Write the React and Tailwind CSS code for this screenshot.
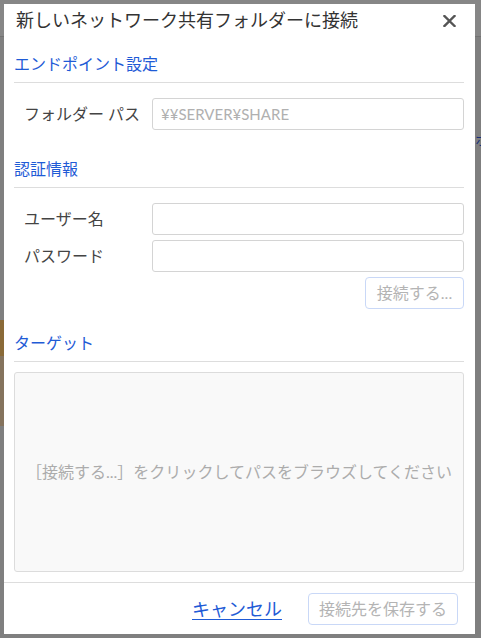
import React from "react";

const font = { fontFamily: "Lato, 'Noto Sans CJK JP', sans-serif" };

function SectionHeader({ children, className = "" }) {
  return (
    <div className={"border-b border-[#dddddd] pb-[6px] " + className}>
      <div className="text-[16px] leading-[24px] text-[#1f5bd6]">{children}</div>
    </div>
  );
}

function Row({ label, placeholder, className = "" }) {
  return (
    <div className={"flex items-center " + className}>
      <div className="w-[138px] pl-[10px] text-[16px] leading-[24px] text-[#444444]">{label}</div>
      <input
        className="h-[32px] w-[312px] rounded-[3px] border border-[#d4d4d4] bg-white px-[8px] text-[15px] text-[#333] outline-none placeholder:text-[#b0b0b0]"
        placeholder={placeholder}
      />
    </div>
  );
}

export default function App() {
  return (
    <div className="relative h-[638px] w-[481px] overflow-hidden bg-[#7f7f7f]" style={font}>
      {/* page behind the overlay */}
      <div className="flex h-full flex-col">
        <div className="h-[37px] border-b border-[#727272] bg-[#868686]" />
        <div className="flex flex-1 justify-between">
          <div className="flex w-[4px] flex-col">
            <div className="h-[283px]" />
            <div className="h-[36px] bg-[#8a6a38]" />
            <div className="h-[70px] bg-[#85735d]" />
          </div>
          <div className="flex w-[6px] flex-col">
            <div className="h-[96px]" />
            <div className="h-[14px] text-[14px] leading-[14px] text-[#1a2f7a]">ホ</div>
          </div>
        </div>
      </div>

      {/* dialog */}
      <div className="absolute left-[4px] top-[4px] flex h-[630px] w-[471px] flex-col bg-white">
        <div className="flex h-[32px] items-center justify-between pl-[12px] pr-[19px]">
          <div className="text-[18px] leading-[24px] text-[#333333]">新しいネットワーク共有フォルダーに接続</div>
          <svg width="13" height="12" viewBox="0 0 13 12" className="mt-[2px]">
            <path d="M1.5 1 L11.5 11 M11.5 1 L1.5 11" stroke="#555555" strokeWidth="2.4" strokeLinecap="square" />
          </svg>
        </div>

        <div className="flex flex-1 flex-col pl-[10px] pr-[11px]">
          <SectionHeader className="mt-[16px]">エンドポイント設定</SectionHeader>
          <Row className="mt-[15px]" label="フォルダー パス" placeholder="¥¥SERVER¥SHARE" />

          <SectionHeader className="mt-[27px]">認証情報</SectionHeader>
          <Row className="mt-[15px]" label="ユーザー名" />
          <Row className="mt-[5px]" label="パスワード" />
          <div className="mt-[5px] flex justify-end">
            <button className="h-[32px] w-[99px] rounded-[4px] border border-[#c9d8f7] bg-white text-[16px] text-[#b4b4b4]">
              接続する...
            </button>
          </div>

          <SectionHeader className="mt-[22px]">ターゲット</SectionHeader>
          <div className="mt-[10px] flex h-[200px] items-center justify-center rounded-[3px] border border-[#dcdcdc] bg-[#f9f9f9]">
            <span className="text-[16px] text-[#acacac]">［接続する...］をクリックしてパスをブラウズしてください</span>
          </div>
        </div>

        <div className="flex h-[52px] items-center justify-end border-t border-[#dddddd] pr-[17px]">
          <a href="#" className="text-[18px] leading-[24px] text-[#1f5bd6] underline underline-offset-[3px]">
            キャンセル
          </a>
          <button className="ml-[26px] h-[32px] w-[150px] rounded-[4px] border border-[#c9d8f7] bg-white text-[16px] text-[#b4b4b4]">
            接続先を保存する
          </button>
        </div>
      </div>
    </div>
  );
}
